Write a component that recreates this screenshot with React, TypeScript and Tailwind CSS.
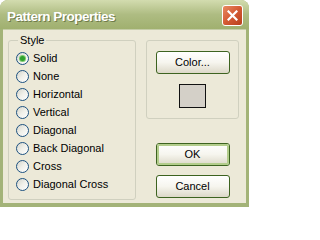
import React from "react";

const options = [
  "Solid",
  "None",
  "Horizontal",
  "Vertical",
  "Diagonal",
  "Back Diagonal",
  "Cross",
  "Diagonal Cross",
];

function Radio({ checked }: { checked: boolean }) {
  return (
    <span className="relative w-[13px] h-[13px] rounded-full border border-[#1C5180] bg-gradient-to-br from-[#D6D6CC] via-[#F0F0EA] to-white shrink-0 flex items-center justify-center">
      {checked && (
        <span className="w-[5px] h-[5px] rounded-full bg-[#2FA12F] shadow-[0_0_0_1px_#7CCB6E]" />
      )}
    </span>
  );
}

function Button({ label, isDefault }: { label: string; isDefault?: boolean }) {
  return (
    <div className="w-[74px] h-[23px] rounded-[3px] border border-[#3D6320] bg-gradient-to-b from-white via-[#F6F5EE] to-[#DCD8C8] flex">
      <div
        className={
          isDefault
            ? "flex-1 rounded-[2px] border-2 border-[#B3CD8C] flex items-center justify-center"
            : "flex-1 flex items-center justify-center"
        }
      >
        <span className="text-[11px] leading-[13px] text-black">{label}</span>
      </div>
    </div>
  );
}

export default function App() {
  return (
    <div className="w-[249px] h-[207px] flex flex-col rounded-t-[8px] bg-[#A3B378] overflow-hidden font-['Liberation_Sans',Arial,sans-serif]">
      <div className="h-[29px] shrink-0 flex items-start pl-[7px] pr-[6px] bg-gradient-to-b from-[#D3DCAF] via-[#AEBC82] to-[#A0B06F]">
        <span className="mt-[9px] text-[13.5px] leading-[15px] font-bold tracking-[-0.5px] text-white [text-shadow:1px_1px_0_#6F7B4A]">
          Pattern Properties
        </span>
        <div className="ml-auto mt-[5px] w-[21px] h-[21px] rounded-[3px] border border-white bg-gradient-to-br from-[#E88A62] via-[#D45A33] to-[#B8401D] flex items-center justify-center">
          <svg width="11" height="11" viewBox="0 0 11 11">
            <path d="M1.5 1.5 L9.5 9.5 M9.5 1.5 L1.5 9.5" stroke="white" strokeWidth="2.2" strokeLinecap="square" />
          </svg>
        </div>
      </div>
      <div className="flex-1 mx-[3px] mb-[4px] bg-[#ECE9D8] flex pt-[10px] pl-[5px] pr-[7px] border-t border-[#C4CCA6]">
        <div className="relative w-[128px] h-[160px] rounded-[3px] border border-[#D0D0BF] pt-[8px] pl-[7px] flex flex-col">
          <span className="absolute left-[9px] top-[-7px] px-[2px] bg-[#ECE9D8] text-[11px] leading-[13px] text-black">
            Style
          </span>
          {options.map((o, i) => (
            <div key={o} className="h-[18px] flex items-center gap-[4px]">
              <Radio checked={i === 0} />
              <span className="text-[11px] leading-[13px] text-black">{o}</span>
            </div>
          ))}
        </div>
        <div className="ml-[10px] w-[93px] flex flex-col">
          <div className="h-[79px] rounded-[3px] border border-[#D0D0BF] pt-[10px] flex flex-col items-center">
            <Button label="Color..." />
            <div className="mt-[10px] w-[27px] h-[24px] border border-[#111] bg-[#D4D0C8]" />
          </div>
          <div className="mt-[24px] flex flex-col items-center gap-[9px]">
            <Button label="OK" isDefault />
            <Button label="Cancel" />
          </div>
        </div>
      </div>
    </div>
  );
}
